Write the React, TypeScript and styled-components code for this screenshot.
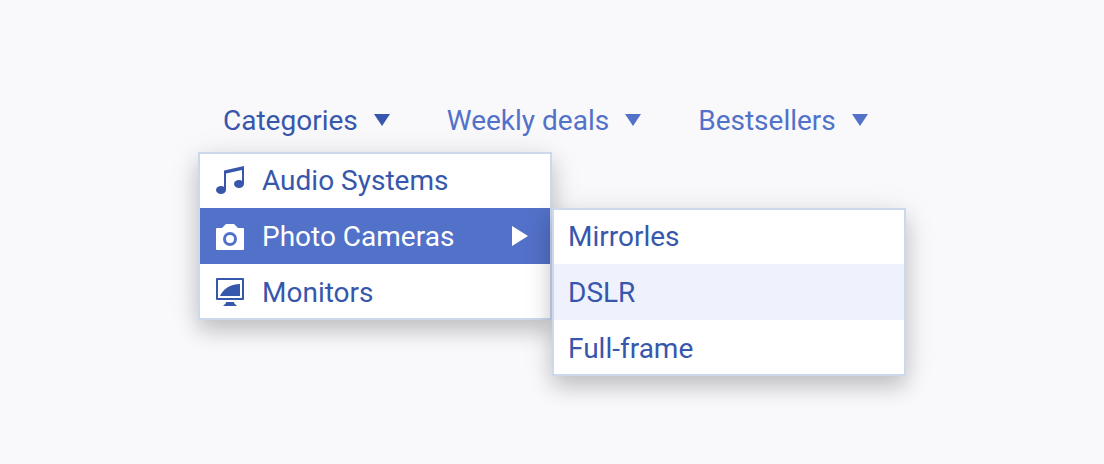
import React from "react";
import styled, { createGlobalStyle } from "styled-components";

const colors = {
  page: "#f9f9fc",
  surface: "#ffffff",
  ink: "#3757ac",
  accent: "#5271c8",
  hover: "#eff2fc",
  border: "#ced8ed",
};

const GlobalStyle = createGlobalStyle`
  *, *::before, *::after { box-sizing: border-box; }
  body {
    margin: 0;
    background: ${colors.page};
    font-family: Roboto, "Liberation Sans", sans-serif;
    font-size: 28px;
    line-height: 32px;
  }
`;

const Page = styled.main`
  min-height: 100vh;
  display: flex;
  align-items: center;
  justify-content: center;
`;

const MenuBar = styled.nav`
  width: 100%;
  max-width: 708px;
`;

const BarList = styled.ul`
  display: flex;
  gap: 7px;
  margin: 0;
  padding: 0;
  list-style: none;
`;

const BarButton = styled.button<{ $open?: boolean }>`
  display: flex;
  align-items: center;
  gap: 16px;
  height: 64px;
  padding: 0 25px;
  border: 0;
  background: none;
  color: ${(p) => (p.$open ? colors.ink : colors.accent)};
  font: inherit;
  white-space: nowrap;
  cursor: pointer;
`;

const Panels = styled.div`
  display: flex;
  align-items: flex-start;
`;

const Menu = styled.ul<{ $nested?: boolean }>`
  position: relative;
  flex: 1;
  min-width: 0;
  margin: ${(p) => (p.$nested ? "56px" : "0")} 0 0;
  padding: 0;
  list-style: none;
  border: 2px solid ${colors.border};
  background: ${colors.surface};
  box-shadow: 0 11px 20px rgba(0, 0, 0, 0.18), 0 4px 32px rgba(0, 0, 0, 0.09);
`;

const MenuRow = styled.li`
  &:first-child { margin-top: -2px; }
  &:last-child { margin-bottom: -2px; }
`;

const MenuButton = styled.button<{ $state?: "selected" | "hover" }>`
  display: flex;
  align-items: center;
  gap: 16px;
  width: 100%;
  height: 56px;
  padding: 0 14px;
  border: 0;
  background: ${(p) =>
    p.$state === "selected" ? colors.accent : p.$state === "hover" ? colors.hover : "none"};
  color: ${(p) => (p.$state === "selected" ? colors.surface : colors.ink)};
  font: inherit;
  text-align: left;
  white-space: nowrap;
  cursor: pointer;
`;

const Label = styled.span`
  flex: 1;
  padding-top: 2px;
`;

const Icon = styled.svg`
  flex: none;
  display: block;
  fill: currentColor;
`;

const CaretDown = () => (
  <Icon width="16" height="12" viewBox="0 0 16 12" aria-hidden="true">
    <path d="M0 0h16L8 12z" />
  </Icon>
);

const CaretRight = () => (
  <Icon width="32" height="32" viewBox="0 0 32 32" aria-hidden="true">
    <path d="M8 6l16 10L8 26z" />
  </Icon>
);

const MusicIcon = () => (
  <Icon width="32" height="32" viewBox="0 0 32 32" aria-hidden="true">
    <path d="M10 6.4L30 2v18h-2V6L12 9.6V26h-2z" />
    <ellipse cx="7" cy="26" rx="5" ry="4" />
    <ellipse cx="25" cy="20" rx="5" ry="4" />
  </Icon>
);

const CameraIcon = () => (
  <Icon width="32" height="32" viewBox="0 0 32 32" aria-hidden="true">
    <path
      fillRule="evenodd"
      d="M3 8h5l4-4h8l4 4h5a1 1 0 0 1 1 1v20a1 1 0 0 1-1 1H3a1 1 0 0 1-1-1V9a1 1 0 0 1 1-1zM16 12a7 7 0 1 0 0 14a7 7 0 1 0 0-14z"
    />
    <circle cx="16" cy="19" r="4" />
  </Icon>
);

const MonitorIcon = () => (
  <Icon width="32" height="32" viewBox="0 0 32 32" aria-hidden="true">
    <path
      fillRule="evenodd"
      d="M3 2h26a1 1 0 0 1 1 1v20a1 1 0 0 1-1 1H3a1 1 0 0 1-1-1V3a1 1 0 0 1 1-1zM4 4v18h24V4z"
    />
    <path d="M6 20C9 13 16 8 26 8v12z" />
    <path d="M12 26h8v1l3 3H9l3-3z" />
  </Icon>
);

const sections = [
  { label: "Categories", open: true },
  { label: "Weekly deals", open: false },
  { label: "Bestsellers", open: false },
];

export default function App() {
  return (
    <>
      <GlobalStyle />
      <Page>
        <MenuBar aria-label="Shop">
          <BarList>
            {sections.map(({ label, open }) => (
              <li key={label}>
                <BarButton type="button" $open={open} aria-haspopup="true" aria-expanded={open}>
                  <Label>{label}</Label>
                  <CaretDown />
                </BarButton>
              </li>
            ))}
          </BarList>
          <Panels>
            <Menu aria-label="Categories">
              <MenuRow>
                <MenuButton type="button">
                  <MusicIcon />
                  <Label>Audio Systems</Label>
                </MenuButton>
              </MenuRow>
              <MenuRow>
                <MenuButton type="button" $state="selected" aria-haspopup="true" aria-expanded>
                  <CameraIcon />
                  <Label>Photo Cameras</Label>
                  <CaretRight />
                </MenuButton>
              </MenuRow>
              <MenuRow>
                <MenuButton type="button">
                  <MonitorIcon />
                  <Label>Monitors</Label>
                </MenuButton>
              </MenuRow>
            </Menu>
            <Menu $nested aria-label="Photo Cameras">
              <MenuRow>
                <MenuButton type="button">
                  <Label>Mirrorles</Label>
                </MenuButton>
              </MenuRow>
              <MenuRow>
                <MenuButton type="button" $state="hover">
                  <Label>DSLR</Label>
                </MenuButton>
              </MenuRow>
              <MenuRow>
                <MenuButton type="button">
                  <Label>Full-frame</Label>
                </MenuButton>
              </MenuRow>
            </Menu>
          </Panels>
        </MenuBar>
      </Page>
    </>
  );
}
